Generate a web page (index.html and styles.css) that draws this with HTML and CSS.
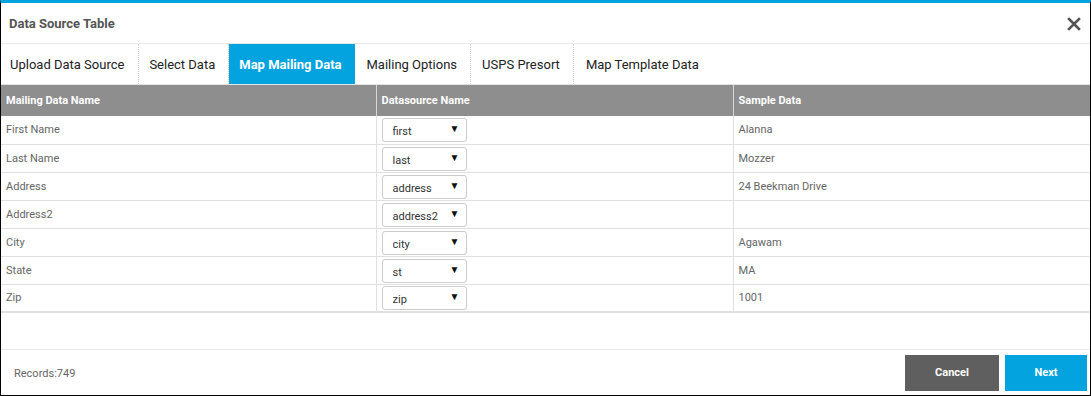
FILE: index.html
```html
<!DOCTYPE html>
<html lang="en">
<head>
    <meta charset="UTF-8">
    <meta name="viewport" content="width=device-width, initial-scale=1.0">
    <title>Data Source Table</title>
    <link rel="stylesheet" href="styles.css">
</head>
<body>
    <div class="modal">
        <div class="modal-header">
            <h4 class="title">Data Source Table</h4>
            <button class="close" title="Close">
                <svg width="14" height="14" viewBox="0 0 14 14"><path d="M2 2 L12 12 M12 2 L2 12" stroke="#555" stroke-width="2.6" stroke-linecap="square"/></svg>
            </button>
        </div>
        <ul class="tabs">
            <li>Upload Data Source</li>
            <li>Select Data</li>
            <li class="active">Map Mailing Data</li>
            <li>Mailing Options</li>
            <li>USPS Presort</li>
            <li class="last">Map Template Data</li>
        </ul>
        <div class="modal-body">
            <table class="map-table">
                <thead>
                    <tr>
                        <th class="col1">Mailing Data Name</th>
                        <th class="col2">Datasource Name</th>
                        <th>Sample Data</th>
                    </tr>
                </thead>
                <tbody>
                    <tr>
                        <td>First Name</td>
                        <td><div class="pick"><select><option>first</option></select><span class="arrow">&#9660;</span></div></td>
                        <td>Alanna</td>
                    </tr>
                    <tr>
                        <td>Last Name</td>
                        <td><div class="pick"><select><option>last</option></select><span class="arrow">&#9660;</span></div></td>
                        <td>Mozzer</td>
                    </tr>
                    <tr>
                        <td>Address</td>
                        <td><div class="pick"><select><option>address</option></select><span class="arrow">&#9660;</span></div></td>
                        <td>24 Beekman Drive</td>
                    </tr>
                    <tr>
                        <td>Address2</td>
                        <td><div class="pick"><select><option>address2</option></select><span class="arrow">&#9660;</span></div></td>
                        <td></td>
                    </tr>
                    <tr>
                        <td>City</td>
                        <td><div class="pick"><select><option>city</option></select><span class="arrow">&#9660;</span></div></td>
                        <td>Agawam</td>
                    </tr>
                    <tr>
                        <td>State</td>
                        <td><div class="pick"><select><option>st</option></select><span class="arrow">&#9660;</span></div></td>
                        <td>MA</td>
                    </tr>
                    <tr>
                        <td>Zip</td>
                        <td><div class="pick"><select><option>zip</option></select><span class="arrow">&#9660;</span></div></td>
                        <td>1001</td>
                    </tr>
                </tbody>
            </table>
        </div>
        <div class="modal-footer">
            <span class="records">Records:749</span>
            <div class="buttons">
                <button class="btn cancel">Cancel</button>
                <button class="btn next">Next</button>
            </div>
        </div>
    </div>
</body>
</html>
```

FILE: styles.css
```css
*{
    box-sizing: border-box;
}
body{
    margin: 0;
    background-color: #fff;
    font-family: Roboto, "Liberation Sans", Arial, sans-serif;
}
.modal{
    width: 1091px;
    height: 396px;
    border: 1px solid #000;
    border-top: 3px solid #03a3e0;
    display: flex;
    flex-direction: column;
    background: #fff;
}
.modal-header{
    height: 41px;
    flex-shrink: 0;
    display: flex;
    align-items: center;
    justify-content: space-between;
    padding: 0 8px 0 8px;
    border-bottom: 1px solid #e8e8e8;
}
.title{
    margin: 0;
    font-size: 13px;
    font-weight: bold;
    color: #555;
}
.close{
    border: none;
    background: none;
    padding: 0;
    margin-top: 2px;
    width: 16px;
    height: 16px;
    display: flex;
    align-items: center;
    justify-content: center;
    cursor: pointer;
}
.tabs{
    list-style: none;
    margin: 0;
    padding: 0;
    display: flex;
    height: 41px;
    flex-shrink: 0;
    border-bottom: 1px solid #e3e3e3;
}
.tabs li{
    padding: 0 13px 0 11px;
    display: flex;
    align-items: center;
    font-size: 13px;
    color: #222;
    border-right: 1px dotted #cfcfcf;
}
.tabs li:first-child{
    padding: 0 14px 0 9px;
}
.tabs li:nth-child(2){
    padding-left: 10px;
}
.tabs li:nth-child(4){
    padding-left: 12px;
}
.tabs li.active{
    background-color: #03a3e0;
    color: #fff;
    font-weight: bold;
    border-right: none;
    padding: 0 13px 0 10px;
}
.tabs li.last{
    border-right: none;
    padding-left: 12px;
}
.modal-body{
    flex: 1;
}
.map-table{
    width: 100%;
    border-collapse: collapse;
    font-size: 11px;
    border-bottom: 2px solid #e0e0e0;
}
.map-table th{
    background-color: #8e8e8e;
    color: #fff;
    text-align: left;
    font-weight: bold;
    height: 31px;
    padding: 0 5px;
    border-left: 1px solid #d8d8d8;
}
.map-table th:first-child, .map-table td:first-child{
    border-left: none;
}
.col1{
    width: 375px;
}
.col2{
    width: 357px;
}
.map-table td{
    height: 28px;
    padding: 0 5px;
    color: #666;
    border-top: 1px solid #e0e0e0;
    border-left: 1px solid #e0e0e0;
    vertical-align: middle;
}
.map-table tr:first-child td{
    border-top: none;
}
.pick{
    position: relative;
    width: 85px;
    height: 24px;
    margin-top: 1px;
}
.pick select{
    -webkit-appearance: none;
    appearance: none;
    width: 85px;
    height: 24px;
    border: 1px solid #ccc;
    border-radius: 3px;
    background: #fff;
    font-family: Roboto, "Liberation Sans", Arial, sans-serif;
    font-size: 11px;
    color: #333;
    padding: 3px 0 0 10px;
}
.arrow{
    position: absolute;
    right: 7px;
    top: 5px;
    font-size: 10px;
    color: #111;
    pointer-events: none;
}
.modal-footer{
    height: 46px;
    flex-shrink: 0;
    border-top: 1px solid #e8e8e8;
    display: flex;
    align-items: center;
    justify-content: space-between;
    padding: 0 3px 0 13px;
}
.records{
    font-size: 11px;
    color: #666;
    padding-top: 1px;
}
.buttons{
    display: flex;
    gap: 6px;
}
.btn{
    height: 36px;
    border: none;
    color: #fff;
    font-family: Roboto, "Liberation Sans", Arial, sans-serif;
    font-size: 11px;
    font-weight: bold;
    cursor: pointer;
}
.cancel{
    width: 94px;
    background-color: #5f5f5f;
}
.next{
    width: 82px;
    background-color: #03a3e0;
}
```
